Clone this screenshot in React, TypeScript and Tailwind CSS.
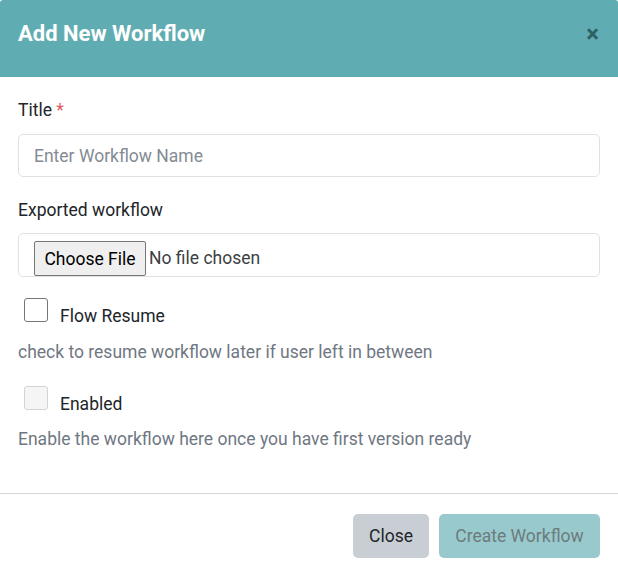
export default function App() {
  const font = { fontFamily: "Roboto, 'Liberation Sans', sans-serif" };
  return (
    <div className="w-[618px] h-[569px] bg-white overflow-hidden" style={font}>
      <div className="h-[77px] bg-[#5fadb3] px-[18px] flex items-center justify-between rounded-t-[3px]">
        <h1 className="text-white text-[22px] font-bold leading-none mt-[-9px]">Add New Workflow</h1>
        <span className="text-[#2f5f63] text-[24px] font-bold leading-none mt-[-9px] mr-[1px]">×</span>
      </div>
      <div className="px-[18px] pt-[21px] h-[416px] text-[17.5px]">
        <div className="leading-[24px] text-[#212529]">
          Title <span className="text-[#e0585f]">*</span>
        </div>
        <div className="mt-[12px] h-[43px] border border-[#dee2e6] rounded-[5px] flex items-center px-[15px] pt-[2px] text-[#848b94]">
          Enter Workflow Name
        </div>
        <div className="mt-[21px] leading-[24px] text-[#212529]">Exported workflow</div>
        <div className="mt-[11px] h-[44px] border border-[#dee2e6] rounded-[5px] flex items-end pl-[15px]">
          <div className="h-[35px] w-[112px] border border-[#767676] bg-[#efefef] rounded-[2px] flex items-center justify-center pt-[1px] text-[#000]">
            Choose File
          </div>
          <span className="ml-[3px] mb-[5px] text-[#3c4043]">No file chosen</span>
        </div>
        <div className="mt-[21px] flex items-start pl-[6px]">
          <div className="w-[24px] h-[24px] border border-[#767676] rounded-[3px] bg-white" />
          <span className="ml-[12px] mt-[6px] leading-[24px] text-[#212529]">Flow Resume</span>
        </div>
        <div className="mt-[12px] leading-[24px] text-[#6f7782]">
          check to resume workflow later if user left in between
        </div>
        <div className="mt-[22px] flex items-start pl-[6px]">
          <div className="w-[24px] h-[24px] border border-[#d4d4d4] rounded-[3px] bg-[#f5f5f5]" />
          <span className="ml-[12px] mt-[6px] leading-[24px] text-[#212529]">Enabled</span>
        </div>
        <div className="mt-[11px] leading-[24px] text-[#6f7782]">
          Enable the workflow here once you have first version ready
        </div>
      </div>
      <div className="border-t border-[#d5d5d5] px-[18px] pt-[20px] flex justify-end gap-[10px] text-[17.5px]">
        <div className="h-[44px] w-[76px] rounded-[5px] bg-[#c9cdd4] flex items-center justify-center text-[#212529]">
          Close
        </div>
        <div className="h-[44px] w-[161px] rounded-[5px] bg-[#98cacd] flex items-center justify-center text-[#6d7b7c]">
          Create Workflow
        </div>
      </div>
    </div>
  );
}
